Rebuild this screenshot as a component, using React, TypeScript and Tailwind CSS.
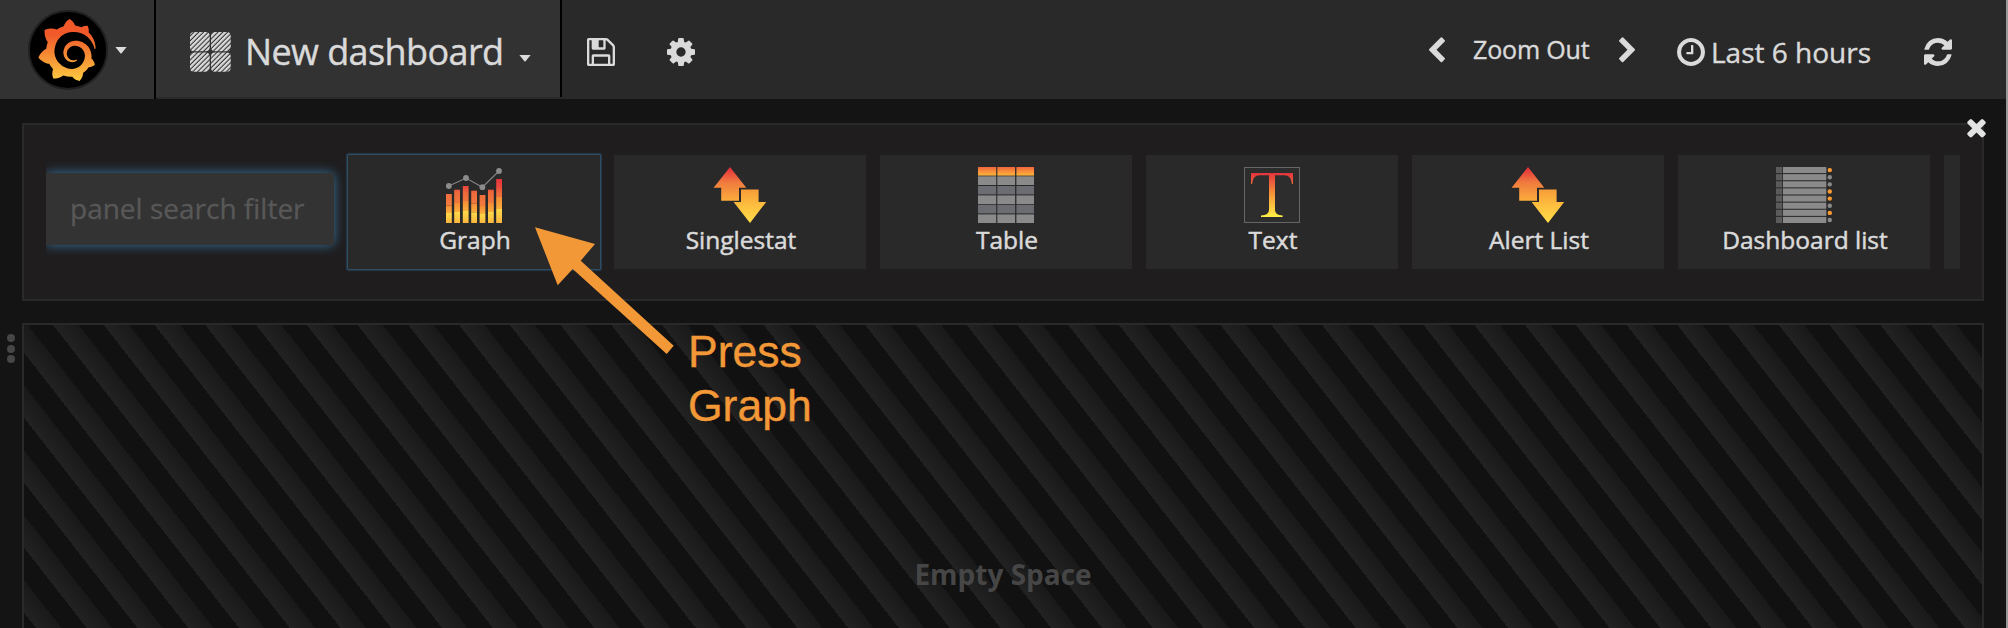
import React from "react";
import { SiGrafana } from "react-icons/si";

const PATHS = {
  cog: "M1152 896q0-106-75-181t-181-75-181 75-75 181 75 181 181 75 181-75 75-181zm512-109v222q0 12-8 23t-20 13l-185 28q-19 54-39 91 35 50 107 138 10 12 10 25t-9 23q-27 37-99 108t-94 71q-12 0-26-9l-138-108q-44 23-91 38-16 136-29 186-7 28-36 28h-222q-14 0-24.5-8.5t-11.5-21.5l-28-184q-49-16-90-37l-141 107q-10 9-25 9-14 0-25-11-126-114-165-168-7-10-7-23 0-12 8-23 15-21 51-66.5t54-70.5q-27-50-41-99l-183-27q-13-2-21-12.5t-8-23.5v-222q0-12 8-23t19-13l186-28q14-46 39-92-40-57-107-138-10-12-10-24 0-10 9-23 26-36 98.5-107.5t94.5-71.5q13 0 26 10l138 107q44-23 91-38 16-136 29-186 7-28 36-28h222q14 0 24.5 8.5t11.5 21.5l28 184q49 16 90 37l142-107q9-9 24-9 13 0 25 10 129 119 165 170 7 8 7 22 0 12-8 23-15 21-51 66.5t-54 70.5q26 50 41 98l183 28q13 2 21 12.5t8 23.5z",
  save: "M512 1536h768v-384h-768v384zm896 0h128v-896q0-14-10-38.5t-20-34.5l-281-281q-10-10-34-20t-39-10v416q0 40-28 68t-68 28h-576q-40 0-68-28t-28-68v-416h-128v1280h128v-416q0-40 28-68t68-28h832q40 0 68 28t28 68v416zm-384-928v-320q0-13-9.5-22.5t-22.5-9.5h-192q-13 0-22.5 9.5t-9.5 22.5v320q0 13 9.5 22.5t22.5 9.5h192q13 0 22.5-9.5t9.5-22.5zm640 32v928q0 40-28 68t-68 28h-1344q-40 0-68-28t-28-68v-1344q0-40 28-68t68-28h928q40 0 88 20t76 48l280 280q28 28 48 76t20 88z",
  clock: "M1024 544v448q0 14-9 23t-23 9h-320q-14 0-23-9t-9-23v-64q0-14 9-23t23-9h224v-352q0-14 9-23t23-9h64q14 0 23 9t9 23zm416 352q0-148-73-273t-198-198-273-73-273 73-198 198-73 273 73 273 198 198 273 73 273-73 198-198 73-273zm224 0q0 209-103 385.5t-279.5 279.5-385.5 103-385.5-103-279.5-279.5-103-385.5 103-385.5 279.5-279.5 385.5-103 385.5 103 279.5 279.5 103 385.5z",
  refresh: "M1639 1056q0 5-1 7-64 268-268 434.5t-478 166.5q-146 0-282.5-55t-243.5-157l-129 129q-19 19-45 19t-45-19-19-45v-448q0-26 19-45t45-19h448q26 0 45 19t19 45-19 45l-137 137q71 66 161 102t187 36q134 0 250-65t186-179q11-17 53-117 8-23 30-23h192q13 0 22.5 9.5t9.5 22.5zm25-800v448q0 26-19 45t-45 19h-448q-26 0-45-19t-19-45 19-45l138-138q-148-137-349-137-134 0-250 65t-186 179q-11 17-53 117-8 23-30 23h-199q-13 0-22.5-9.5t-9.5-22.5v-7q65-268 270-434.5t480-166.5q146 0 284 55.5t245 156.5l130-129q19-19 45-19t45 19 19 45z",
  close: "M1490 1322q0 40-28 68l-136 136q-28 28-68 28t-68-28l-294-294-294 294q-28 28-68 28t-68-28l-136-136q-28-28-28-68t28-68l294-294-294-294q-28-28-28-68t28-68l136-136q28-28 68-28t68 28l294 294 294-294q28-28 68-28t68 28l136 136q28 28 28 68t-28 68l-294 294 294 294q28 28 28 68z",
  left: "M1427 301l-531 531 531 531q19 19 19 45t-19 45l-166 166q-19 19-45 19t-45-19l-742-742q-19-19-19-45t19-45l742-742q19-19 45-19t45 19l166 166q19 19 19 45t-19 45z",
  right: "M1363 877l-742 742q-19 19-45 19t-45-19l-166-166q-19-19-19-45t19-45l531-531-531-531q-19-19-19-45t19-45l166-166q19-19 45-19t45 19l742 742q19 19 19 45t-19 45z",
};

function Glyph({ name, box = "128 128 1536 1536", className }: { name: keyof typeof PATHS; box?: string; className: string }) {
  return (
    <svg viewBox={box} className={`shrink-0 ${className}`} fill="currentColor">
      <path d={PATHS[name]} />
    </svg>
  );
}

function Caret({ className }: { className: string }) {
  return (
    <svg viewBox="0 0 12 7" className={`h-[7px] w-3 shrink-0 ${className}`} fill="#dcdcdc">
      <path d="M0.4 0H11.6L6.6 6.3Q6 6.9 5.4 6.3Z" />
    </svg>
  );
}

function GrafanaLogo() {
  return (
    <div className="flex size-20 items-center justify-center rounded-full border-2 border-[#1f1f1f] bg-black pr-[3px]">
      <svg width="0" height="0" className="absolute">
        <linearGradient id="logo" x1="0" y1="0" x2="0" y2="1">
          <stop offset="0.25" stopColor="#f1592a" />
          <stop offset="1" stopColor="#fccb41" />
        </linearGradient>
      </svg>
      <SiGrafana size={62} fill="url(#logo)" />
    </div>
  );
}

function AppsIcon() {
  return (
    <svg viewBox="0 0 41 40" className="h-10 w-[41px] shrink-0">
      <defs>
        <pattern id="hatch" width="3.4" height="3.4" patternUnits="userSpaceOnUse" patternTransform="rotate(-45)">
          <rect width="3.4" height="2.3" fill="#dadada" />
        </pattern>
      </defs>
      {[0, 21].map((x) =>
        [0, 20.5].map((y) => <rect key={`${x}-${y}`} x={x} y={y} width="19.7" height="19.3" rx="4" fill="url(#hatch)" />)
      )}
    </svg>
  );
}

const BARS = [
  { x: 0, y: 27, a: 38.5, b: 46 },
  { x: 8.2, y: 22.7, a: 36, b: 45 },
  { x: 16.8, y: 19, a: 34, b: 44 },
  { x: 25.2, y: 23.7, a: 36.7, b: 45.3 },
  { x: 33.6, y: 28, a: 39, b: 47 },
  { x: 42, y: 22.7, a: 36, b: 45 },
  { x: 50.2, y: 12, a: 30, b: 42 },
];

function GraphIcon() {
  return (
    <svg viewBox="0 0 56 56" className="size-14">
      <defs>
        <linearGradient id="barRed" gradientUnits="userSpaceOnUse" x1="0" y1="12" x2="0" y2="40">
          <stop offset="0" stopColor="#e5333c" />
          <stop offset="0.3" stopColor="#ea4a3c" />
          <stop offset="0.5" stopColor="#ee6a3c" />
          <stop offset="1" stopColor="#f27e3e" />
        </linearGradient>
        <linearGradient id="barOrange" x1="0" y1="0" x2="0" y2="1">
          <stop offset="0" stopColor="#f58b36" />
          <stop offset="1" stopColor="#fbaf3d" />
        </linearGradient>
        <linearGradient id="barYellow" x1="0" y1="0" x2="0" y2="1">
          <stop offset="0" stopColor="#ffda48" />
          <stop offset="1" stopColor="#fcb63f" />
        </linearGradient>
      </defs>
      {BARS.map((b) => (
        <g key={b.x}>
          <rect x={b.x} y={b.y} width="5.8" height={b.a - b.y} fill="url(#barRed)" />
          <rect x={b.x} y={b.a} width="5.8" height={b.b - b.a} fill="url(#barOrange)" />
          <rect x={b.x} y={b.b} width="5.8" height={56 - b.b} fill="url(#barYellow)" />
        </g>
      ))}
      <path d="M2.8 19 20 11 36.4 20.2 53 4" fill="none" stroke="#858585" strokeWidth="1.1" />
      <g fill="#8c8c8c">
        <circle cx="2.8" cy="19" r="2.9" />
        <circle cx="20" cy="11" r="2.9" />
        <circle cx="36.4" cy="20.2" r="2.9" />
        <circle cx="53" cy="4" r="2.9" />
      </g>
    </svg>
  );
}

function ArrowsIcon() {
  return (
    <svg viewBox="0 0 56 56" className="size-14">
      <defs>
        <linearGradient id="up" x1="0" y1="0" x2="0" y2="1">
          <stop offset="0.05" stopColor="#e5333c" />
          <stop offset="0.45" stopColor="#f07a3e" />
          <stop offset="1" stopColor="#fbac3b" />
        </linearGradient>
        <linearGradient id="down" x1="0" y1="0" x2="0" y2="1">
          <stop offset="0" stopColor="#f79c38" />
          <stop offset="0.5" stopColor="#fec03f" />
          <stop offset="1" stopColor="#ffdd4a" />
        </linearGradient>
      </defs>
      <path d="M18 0 34.3 20.8H27V33.7H9.2V20.8H1.6Z" fill="url(#up)" />
      <path d="M29 22.5H46.6V35H54.2L38 56 21.6 35H29Z" fill="url(#down)" />
    </svg>
  );
}

function TableIcon() {
  const rows = [
    { y: 0, h: 8.6, fill: "url(#head)" },
    { y: 9.3, h: 8.7, fill: "#8a8a8a" },
    { y: 19, h: 8.4, fill: "#6c6d72" },
    { y: 28.4, h: 8.8, fill: "#8a8a8a" },
    { y: 38, h: 8.4, fill: "#6c6d72" },
    { y: 47.4, h: 8.6, fill: "#8a8a8a" },
  ];
  return (
    <svg viewBox="0 0 56 56" className="size-14">
      <linearGradient id="head" x1="0" y1="0" x2="0" y2="1">
        <stop offset="0" stopColor="#f0653c" />
        <stop offset="1" stopColor="#fdb53a" />
      </linearGradient>
      {rows.map((r) =>
        [0, 19.3, 38.4].map((x) => <rect key={`${x}-${r.y}`} x={x} y={r.y} width={x === 0 ? 18.2 : 17.8} height={r.h} fill={r.fill} />)
      )}
    </svg>
  );
}

function TextIcon() {
  return (
    <svg viewBox="0 0 56 56" className="size-14">
      <linearGradient id="tee" x1="0" y1="0" x2="0" y2="1">
        <stop offset="0" stopColor="#e5333c" />
        <stop offset="0.5" stopColor="#f7993a" />
        <stop offset="1" stopColor="#fff046" />
      </linearGradient>
      <rect x="0.5" y="0.5" width="55" height="55" fill="#2d2d2d" stroke="#666" />
      <path
        d="M7 6H49V17H47.9Q47.3 8.2 40.6 8.2H31V43Q31 48.4 38.6 48.4V50H17V48.4Q25 48.4 25 43V8.2H15.4Q8.700 8.200 8.1 17H7Z"
        fill="url(#tee)"
      />
    </svg>
  );
}

function ListIcon() {
  const orange = [0, 3, 4, 6];
  return (
    <svg viewBox="0 0 56 56" className="size-14">
      {[0, 1, 2, 3, 4, 5, 6, 7].map((i) => (
        <g key={i}>
          <rect x="0" y={i * 7.13} width="6.2" height="6.1" fill="#5b5b5b" />
          <rect x="7" y={i * 7.13} width="43.300" height="6.1" fill="#8a8a8a" />
          <circle cx="53.8" cy={i * 7.13 + 3.1} r="2.2" fill={orange.includes(i) ? "#fb9a33" : "#8a8a8a"} />
        </g>
      ))}
    </svg>
  );
}

const PANELS = [
  { label: "Graph", icon: <GraphIcon />, active: true },
  { label: "Singlestat", icon: <ArrowsIcon /> },
  { label: "Table", icon: <TableIcon /> },
  { label: "Text", icon: <TextIcon /> },
  { label: "Alert List", icon: <ArrowsIcon /> },
  { label: "Dashboard list", icon: <ListIcon /> },
  { label: "", icon: null },
];

function Header() {
  return (
    <header className="flex h-[99px] shrink-0 bg-[#292929] text-[#dadada] [-webkit-text-stroke:0.4px_#dadada]">
      <div className="flex w-[156px] items-center border-r-2 border-black bg-[#323232] pl-7">
        <GrafanaLogo />
        <Caret className="ml-[7px] mt-0.5" />
      </div>
      <div className="flex h-[97px] w-[406px] items-center border-r-2 border-black bg-[#323232] pl-[34px]">
        <div className="mt-[7px]">
          <AppsIcon />
        </div>
        <span className="ml-3.5 mt-1.5 w-[259px] whitespace-nowrap text-[36px] leading-[48px] tracking-[-0.6px]">New dashboard</span>
        <Caret className="ml-[15px] mt-[19px]" />
      </div>
      <div className="flex pl-[25px] pt-[37.500px]">
        <Glyph name="save" className="size-7" />
        <Glyph name="cog" className="ml-[52px] size-7" />
      </div>
      <div className="ml-auto flex items-start pr-[54px]">
        <Glyph name="left" box="410 26 1036 1612" className="mt-[37px] h-[25.5px] w-4" />
        <span className="ml-7 mt-[31px] w-[118px] whitespace-nowrap text-[25px] leading-9 tracking-[-0.15px]">Zoom Out</span>
        <Glyph name="right" box="346 26 1036 1612" className="ml-7 mt-[37px] h-[25.5px] w-4" />
        <Glyph name="clock" className="ml-[42px] mt-[37.500px] size-7" />
        <span className="ml-1.5 mt-8 w-[162px] whitespace-nowrap text-[28px] leading-10">Last 6 hours</span>
        <Glyph name="refresh" className="ml-[51px] mt-[37.500px] size-7" />
      </div>
    </header>
  );
}

function PanelPicker() {
  return (
    <section className="relative mx-[22px] mt-6 h-[178px] shrink-0 border-2 border-[#292929] bg-[#1f1d1e] px-[22px]">
      <div className="flex h-full gap-[14px] overflow-hidden py-[30px]">
        <input
          placeholder="panel search filter"
          className="mt-[18px] h-[72px] w-72 shrink-0 rounded-r bg-[#333] pb-0.5 pl-6 text-[28px] text-white shadow-[0_0_12px_#37749e] outline-none [-webkit-text-stroke:0.3px_#585858] placeholder:text-[#585858] placeholder:opacity-100"
        />
        {PANELS.map((p) => (
          <div
            key={p.label}
            className={
              "flex h-[114px] w-[252px] shrink-0 flex-col items-center bg-[#292929] pt-3 " +
              (p.active ? "shadow-[0_0_2px_1px_#35658a]" : "")
            }
          >
            {p.icon}
            <span className="whitespace-nowrap pl-0.5 text-[24.5px] leading-[34px] text-[#dadada] [-webkit-text-stroke:0.5px_#dadada]">{p.label}</span>
          </div>
        ))}
      </div>
      <Glyph name="close" box="302 366 1188 1188" className="absolute -right-1 -top-1.5 h-[18.5px] w-[19px] text-[#e3e3e3]" />
    </section>
  );
}

function EmptyRow() {
  return (
    <section className="mt-[22px] flex grow">
      <div className="flex w-[22px] flex-col gap-[2.5px] pl-[7px] pt-[11px]">
        <i className="size-2 rounded-sm bg-[#464646]" />
        <i className="size-2 rounded-sm bg-[#464646]" />
        <i className="size-2 rounded-sm bg-[#464646]" />
      </div>
      <div className="mr-[22px] flex grow justify-center border-2 border-b-0 border-[#292929] bg-[repeating-linear-gradient(-128deg,#111_0px,#111_20px,#191919_20px,#222_40px)] pt-[229px]">
        <span className="text-[28px] font-bold leading-10 text-[#464646]">Empty Space</span>
      </div>
    </section>
  );
}

export default function App() {
  return (
    <div className="relative flex h-[628px] w-[2008px] flex-col overflow-hidden border-r-2 border-[#999] bg-[#141414] font-['Open_Sans',sans-serif]">
      <Header />
      <PanelPicker />
      <EmptyRow />
      <svg viewBox="0 0 140 128" className="absolute left-[535px] top-[227px] h-32 w-[140px]" fill="#f29837">
        <path d="M0 0.300 60 17 45.700 33.700 138.700 118.700 131.700 127 37.700 42 22.700 58.300Z" />
      </svg>
      <div className="absolute left-[688px] top-[325px] w-32 font-['Liberation_Sans',sans-serif] text-[44.5px] leading-[54px] text-[#f29837] [-webkit-text-stroke:0.4px_#f29837]">
        Press Graph
      </div>
    </div>
  );
}
